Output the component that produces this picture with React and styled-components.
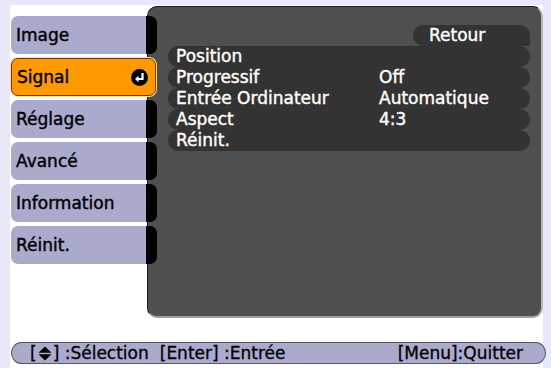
import React from "react";
import styled, { createGlobalStyle } from "styled-components";

const Global = createGlobalStyle`
  html, body { margin: 0; padding: 0; background: #e8e8f8; }
  body { font-family: "DejaVu Sans", Verdana, sans-serif; }
  #root { width: 551px; height: 368px; overflow: hidden; }
`;

const Page = styled.div`
  width: 551px;
  height: 368px;
  box-sizing: border-box;
  padding: 5px 8px 0 10px;
  background: #e8e8f8;
`;

const Screen = styled.div`
  height: 363px;
  background: #ffffff;
  display: flex;
  flex-direction: column;
  padding: 1px 0 0 1px;
  box-sizing: border-box;
`;

const Main = styled.div`
  display: flex;
  height: 312px;
`;

const TabColumn = styled.div`
  display: flex;
  flex-direction: column;
  gap: 4px;
  padding-top: 10px;
  width: 146px;
  margin-right: -10px;
  position: relative;
  z-index: 1;
`;

const Tab = styled.div`
  height: 38px;
  box-sizing: border-box;
  display: flex;
  align-items: center;
  justify-content: space-between;
  padding: 0 7px 0 5px;
  font-size: 17px;
  -webkit-text-stroke: 0.4px #000;
  color: #000;
  border-radius: 7px;
  width: ${(p) => (p.$active ? "145px" : "146px")};
  background: ${(p) =>
    p.$active
      ? "#ff9900"
      : "linear-gradient(to right, #aaaacc 0, #aaaacc 135px, #000 135px)"};
  border: ${(p) => (p.$active ? "1px solid #6b3c00" : "none")};
  box-shadow: ${(p) => (p.$active ? "0 0 0 1px #ffd9a0" : "none")};
`;

const Panel = styled.div`
  flex: 1;
  background: #4f4f4f;
  border-radius: 10px;
  border-top: 1px solid #1c1c1c;
  border-left: 1px solid #1c1c1c;
  border-right: 2px solid #b8b8b8;
  border-bottom: 2px solid #a0a0a0;
  box-sizing: border-box;
  padding: 18px 11px 0 20px;
  display: flex;
  flex-direction: column;
`;

const BackRow = styled.div`
  display: flex;
  justify-content: flex-end;
`;

const BackPill = styled.div`
  width: 117px;
  height: 21px;
  box-sizing: border-box;
  background: #333333;
  border-radius: 10px 10px 0 10px;
  color: #fff;
  font-size: 17px;
  -webkit-text-stroke: 0.4px #fff;
  line-height: 21px;
  padding-left: 16px;
`;

const List = styled.div`
  display: flex;
  flex-direction: column;
`;

const Row = styled.div`
  height: 21px;
  display: grid;
  grid-template-columns: 203px 1fr;
  align-items: center;
  padding-left: 8px;
  background: #333333;
  border-radius: 10px;
  color: #fff;
  font-size: 17px;
  -webkit-text-stroke: 0.4px #fff;
  line-height: 21px;
  white-space: nowrap;
`;

const Footer = styled.div`
  margin-top: 24px;
  margin-right: -3px;
  height: 22px;
  box-sizing: border-box;
  background: #aaaacc;
  border: 1px solid #555566;
  border-radius: 11px / 12px;
  display: flex;
  align-items: center;
  padding: 0 22px 0 18px;
  font-size: 17px;
  -webkit-text-stroke: 0.3px #000;
  color: #000;
  white-space: nowrap;
`;

const Hint = styled.span`
  display: inline-flex;
  align-items: center;
  margin-right: ${(p) => p.$gap || 0}px;
`;

const Spacer = styled.div`
  flex: 1;
`;

const EnterIcon = () => (
  <svg width="17" height="17" viewBox="0 0 17 17">
    <circle cx="8.5" cy="8.5" r="8.5" fill="#000" />
    <path d="M11.5 4 V10 H7" stroke="#fff" strokeWidth="2.2" fill="none" />
    <polygon points="4,10 7.5,6.8 7.5,13.2" fill="#fff" />
  </svg>
);

const UpDown = () => (
  <svg width="14" height="15" viewBox="0 0 14 15" style={{ margin: "0 1px" }}>
    <polygon points="7,0.5 13.5,6.8 0.5,6.8" fill="#000" />
    <polygon points="0.5,8.2 13.5,8.2 7,14.5" fill="#000" />
  </svg>
);

const tabs = ["Image", "Signal", "Réglage", "Avancé", "Information", "Réinit."];
const rows = [
  ["Position", ""],
  ["Progressif", "Off"],
  ["Entrée Ordinateur", "Automatique"],
  ["Aspect", "4:3"],
  ["Réinit.", ""],
];

export default function App() {
  return (
    <>
      <Global />
      <Page>
        <Screen>
          <Main>
            <TabColumn>
              {tabs.map((t) => (
                <Tab key={t} $active={t === "Signal"}>
                  <span>{t}</span>
                  {t === "Signal" && <EnterIcon />}
                </Tab>
              ))}
            </TabColumn>
            <Panel>
              <BackRow>
                <BackPill>Retour</BackPill>
              </BackRow>
              <List>
                {rows.map(([l, v]) => (
                  <Row key={l}>
                    <span>{l}</span>
                    <span>{v}</span>
                  </Row>
                ))}
              </List>
            </Panel>
          </Main>
          <Footer>
            <Hint $gap={11}>
              [<UpDown />]&nbsp;:Sélection
            </Hint>
            <Hint>[Enter]&nbsp;:Entrée</Hint>
            <Spacer />
            <Hint>[Menu]:Quitter</Hint>
          </Footer>
        </Screen>
      </Page>
    </>
  );
}
